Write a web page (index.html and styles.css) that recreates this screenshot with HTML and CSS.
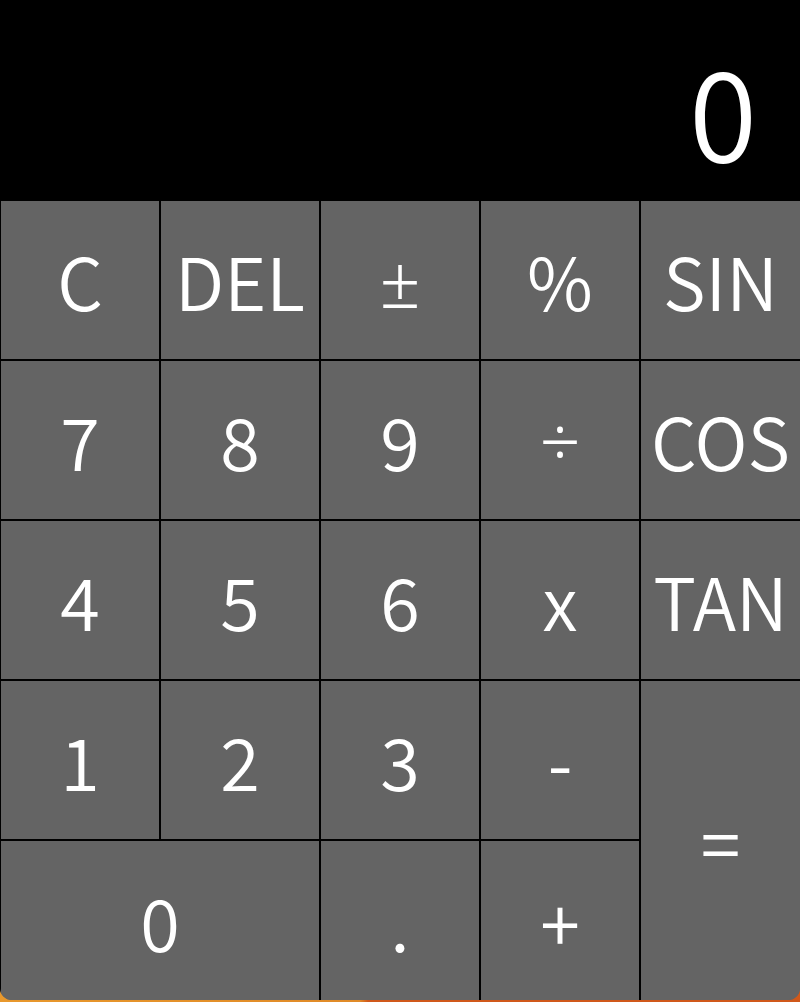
FILE: index.html
```html
<!DOCTYPE html>
<html lang="en">
<head>
<meta charset="utf-8">
<title>Calculator</title>
<link rel="stylesheet" href="styles.css">
</head>
<body>
<div class="calc">
  <div class="display"><span class="value">0</span></div>
  <div class="keys">
    <button class="key">C</button>
    <button class="key">DEL</button>
    <button class="key sym">±</button>
    <button class="key">%</button>
    <button class="key last-col">SIN</button>
    <button class="key">7</button>
    <button class="key">8</button>
    <button class="key">9</button>
    <button class="key sym">÷</button>
    <button class="key last-col">COS</button>
    <button class="key">4</button>
    <button class="key">5</button>
    <button class="key">6</button>
    <button class="key">x</button>
    <button class="key last-col">TAN</button>
    <button class="key">1</button>
    <button class="key">2</button>
    <button class="key">3</button>
    <button class="key">-</button>
    <button class="key last-col equals">=</button>
    <button class="key last-row zero">0</button>
    <button class="key last-row">.</button>
    <button class="key last-row">+</button>
  </div>
</div>
</body>
</html>
```

FILE: styles.css
```css
html, body {
  margin: 0;
  padding: 0;
}

body {
  width: 800px;
  height: 1002px;
  background: linear-gradient(to right, #e8982c 0%, #e08a28 45%, #d0581a 46%, #d0581a 100%);
  font-family: "Noto Sans CJK JP", "Noto Sans", sans-serif;
  font-weight: 350;
  overflow: hidden;
}

.calc {
  width: 800px;
  height: 1000px;
  border-radius: 0 0 12px 12px;
  overflow: hidden;
  background: #646464;
}

.display {
  height: 200px;
  background: #000;
  color: #fff;
  display: flex;
  justify-content: flex-end;
  align-items: flex-end;
  box-sizing: border-box;
  padding: 0 43px 30px 0;
}

.value {
  font-size: 124px;
  line-height: 1;
}

.keys {
  display: grid;
  grid-template-columns: repeat(5, 160px);
  grid-template-rows: repeat(5, 160px);
}

.key {
  margin: 0;
  padding: 0;
  background: #646464;
  color: #fff;
  border: 1px solid #000;
  box-sizing: border-box;
  font-family: inherit;
  font-weight: 350;
  font-size: 72px;
  line-height: 1;
  display: flex;
  align-items: center;
  justify-content: center;
  overflow: visible;
  white-space: nowrap;
}

.sym {
  font-family: "Noto Sans", sans-serif;
  font-weight: 300;
}

.last-col {
  border-right: none;
}

.last-row {
  border-bottom: none;
}

.equals {
  grid-row: span 2;
  border-bottom: none;
}

.zero {
  grid-column: span 2;
}
```
